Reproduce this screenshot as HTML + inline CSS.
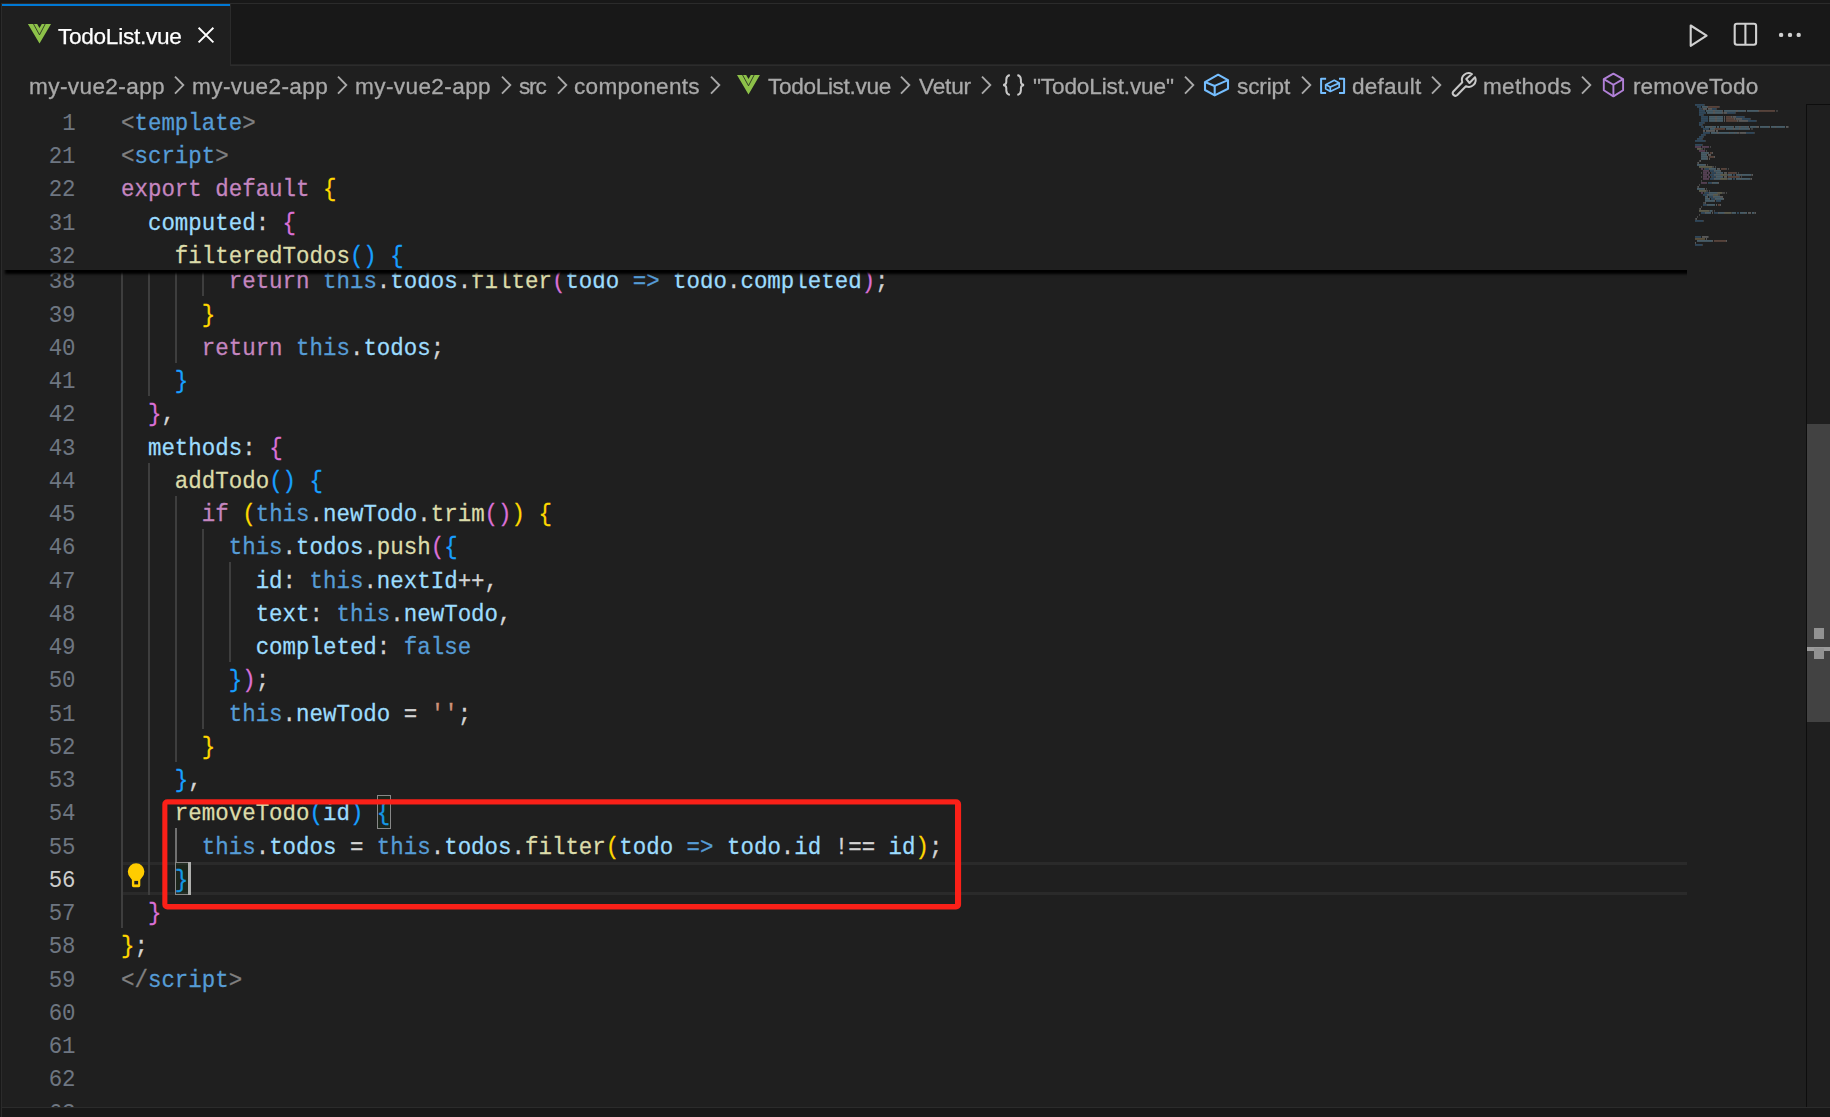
<!DOCTYPE html>
<html lang="en">
<head>
<meta charset="utf-8">
<title>TodoList.vue</title>
<style>
*{box-sizing:border-box;margin:0;padding:0}
html,body{width:1830px;height:1117px;overflow:hidden;background:#1f1f1f}
body{position:relative;font-family:"Liberation Sans",sans-serif;color:#cccccc}
.abs{position:absolute}
/* chrome */
#topstrip{left:0;top:0;width:1830px;height:3px;background:#181818}
#topline{left:0;top:3px;width:1830px;height:1px;background:#2b2b2b}
#tabbar{left:0;top:4px;width:1830px;height:60px;background:#181818}
#tabline1{left:0;top:64px;width:1830px;height:1px;background:#252525}
#tabline2{left:0;top:65px;width:1830px;height:1px;background:#2c2c2c}
#leftedge{left:0;top:0;width:1px;height:1117px;background:#181818}
#leftline{left:1px;top:3px;width:1px;height:1114px;background:#2b2b2b}
#tab{left:2px;top:4px;width:229px;height:62px;background:#1f1f1f;border-right:1px solid #2b2b2b}
#tabtop{left:2px;top:4px;width:228px;height:2px;background:#0078d4}
#tablabel{-webkit-text-stroke:0.25px;will-change:transform;left:58.2px;top:24px;font-size:22.6px;line-height:normal;color:#ffffff;white-space:nowrap;letter-spacing:-0.28px}
.bc{-webkit-text-stroke:0.3px;will-change:transform;position:absolute;top:74px;font-size:22.6px;line-height:normal;color:#a9a9a9;white-space:nowrap}
.ic{position:absolute;overflow:visible}
/* editor */
.cl,.ln{position:absolute;font-family:"Liberation Mono",monospace;font-size:22.45px;line-height:33.25px;height:33.25px;white-space:pre;transform:scaleY(1.06);transform-origin:0 22.6px}
.cl{left:121.00px;color:#d4d4d4;-webkit-text-stroke:0.25px}
.ln{left:0;width:75.6px;text-align:right;color:#6e7681;transform:scaleY(1.09)}
.ln.act{color:#cccccc}
.g{color:#808080}.t{color:#569cd6}.k{color:#c586c0}.p{color:#9cdcfe}.f{color:#dcdcaa}.w{color:#d4d4d4}.s{color:#ce9178}
.b1{color:#ffd700}.b2{color:#da70d6}.b3{color:#179fff}
.gd{position:absolute;width:2px;height:33.25px;background:#3e3e3e}
.ga{background:#707070}
#sticky{left:2px;top:0;width:1700px;height:166.25px;background:#1f1f1f;box-shadow:0 7px 2.5px -3px #000000}
#stickywrap{left:0;top:103.75px;width:1687px;height:200px;overflow:hidden}
#curline{left:121px;top:862px;width:1566px;height:33px;border-top:3px solid #2a2a2a;border-bottom:3px solid #2a2a2a}
.bm{position:absolute;width:13.5px;height:33.25px;border:1px solid #888888;background:rgba(0,100,0,0.1)}
#cursor{left:188px;top:861.7px;width:3px;height:33.25px;background:#aeafad}
/* scrollbar */
#sbline{left:1806px;top:104px;width:1px;height:1003px;background:#0d0d0d}
#sbtop{left:1806px;top:104px;width:24px;height:1px;background:#0d0d0d}
#slider{left:1807px;top:424px;width:23px;height:298px;background:#424242}
.sq{position:absolute;left:1814px;width:10px;height:10.4px;background:#929292}
#curmark{left:1807px;top:647.4px;width:23px;height:3.4px;background:#9b9b9b}
#bottomline{left:0;top:1107px;width:1830px;height:1px;background:#2b2b2b}
#bottom{left:0;top:1108px;width:1830px;height:9px;background:#181818}
</style>
</head>
<body>
<!-- editor main lines -->
<div class="abs" id="curline"></div>
<div id="editor">
<div class="ln" style="top:266.00px">38</div>
<div class="cl" style="top:266.00px"><span class="w">        </span><span class="k">return </span><span class="t">this</span><span class="w">.</span><span class="p">todos</span><span class="w">.</span><span class="f">filter</span><span class="b2">(</span><span class="p">todo </span><span class="t">=&gt; </span><span class="p">todo</span><span class="w">.</span><span class="p">completed</span><span class="b2">)</span><span class="w">;</span></div>
<i class="gd" style="left:121.00px;top:263.20px"></i>
<i class="gd" style="left:148.00px;top:263.20px"></i>
<i class="gd" style="left:175.00px;top:263.20px"></i>
<i class="gd" style="left:202.00px;top:263.20px"></i>
<div class="ln" style="top:300.00px">39</div>
<div class="cl" style="top:300.00px"><span class="w">      </span><span class="b1">}</span></div>
<i class="gd" style="left:121.00px;top:296.45px"></i>
<i class="gd" style="left:148.00px;top:296.45px"></i>
<i class="gd" style="left:175.00px;top:296.45px"></i>
<div class="ln" style="top:333.00px">40</div>
<div class="cl" style="top:333.00px"><span class="w">      </span><span class="k">return </span><span class="t">this</span><span class="w">.</span><span class="p">todos</span><span class="w">;</span></div>
<i class="gd" style="left:121.00px;top:329.70px"></i>
<i class="gd" style="left:148.00px;top:329.70px"></i>
<i class="gd" style="left:175.00px;top:329.70px"></i>
<div class="ln" style="top:366.00px">41</div>
<div class="cl" style="top:366.00px"><span class="w">    </span><span class="b3">}</span></div>
<i class="gd" style="left:121.00px;top:362.95px"></i>
<i class="gd" style="left:148.00px;top:362.95px"></i>
<div class="ln" style="top:399.00px">42</div>
<div class="cl" style="top:399.00px"><span class="w">  </span><span class="b2">}</span><span class="w">,</span></div>
<i class="gd" style="left:121.00px;top:396.20px"></i>
<div class="ln" style="top:433.00px">43</div>
<div class="cl" style="top:433.00px"><span class="w">  </span><span class="p">methods</span><span class="w">: </span><span class="b2">{</span></div>
<i class="gd" style="left:121.00px;top:429.45px"></i>
<div class="ln" style="top:466.00px">44</div>
<div class="cl" style="top:466.00px"><span class="w">    </span><span class="f">addTodo</span><span class="b3">() {</span></div>
<i class="gd" style="left:121.00px;top:462.70px"></i>
<i class="gd" style="left:148.00px;top:462.70px"></i>
<div class="ln" style="top:499.00px">45</div>
<div class="cl" style="top:499.00px"><span class="w">      </span><span class="k">if </span><span class="b1">(</span><span class="t">this</span><span class="w">.</span><span class="p">newTodo</span><span class="w">.</span><span class="f">trim</span><span class="b2">()</span><span class="b1">) {</span></div>
<i class="gd" style="left:121.00px;top:495.95px"></i>
<i class="gd" style="left:148.00px;top:495.95px"></i>
<i class="gd" style="left:175.00px;top:495.95px"></i>
<div class="ln" style="top:532.00px">46</div>
<div class="cl" style="top:532.00px"><span class="w">        </span><span class="t">this</span><span class="w">.</span><span class="p">todos</span><span class="w">.</span><span class="f">push</span><span class="b2">(</span><span class="b3">{</span></div>
<i class="gd" style="left:121.00px;top:529.20px"></i>
<i class="gd" style="left:148.00px;top:529.20px"></i>
<i class="gd" style="left:175.00px;top:529.20px"></i>
<i class="gd" style="left:202.00px;top:529.20px"></i>
<div class="ln" style="top:566.00px">47</div>
<div class="cl" style="top:566.00px"><span class="w">          </span><span class="p">id</span><span class="w">: </span><span class="t">this</span><span class="w">.</span><span class="p">nextId</span><span class="w">++,</span></div>
<i class="gd" style="left:121.00px;top:562.45px"></i>
<i class="gd" style="left:148.00px;top:562.45px"></i>
<i class="gd" style="left:175.00px;top:562.45px"></i>
<i class="gd" style="left:202.00px;top:562.45px"></i>
<i class="gd" style="left:229.00px;top:562.45px"></i>
<div class="ln" style="top:599.00px">48</div>
<div class="cl" style="top:599.00px"><span class="w">          </span><span class="p">text</span><span class="w">: </span><span class="t">this</span><span class="w">.</span><span class="p">newTodo</span><span class="w">,</span></div>
<i class="gd" style="left:121.00px;top:595.70px"></i>
<i class="gd" style="left:148.00px;top:595.70px"></i>
<i class="gd" style="left:175.00px;top:595.70px"></i>
<i class="gd" style="left:202.00px;top:595.70px"></i>
<i class="gd" style="left:229.00px;top:595.70px"></i>
<div class="ln" style="top:632.00px">49</div>
<div class="cl" style="top:632.00px"><span class="w">          </span><span class="p">completed</span><span class="w">: </span><span class="t">false</span></div>
<i class="gd" style="left:121.00px;top:628.95px"></i>
<i class="gd" style="left:148.00px;top:628.95px"></i>
<i class="gd" style="left:175.00px;top:628.95px"></i>
<i class="gd" style="left:202.00px;top:628.95px"></i>
<i class="gd" style="left:229.00px;top:628.95px"></i>
<div class="ln" style="top:665.00px">50</div>
<div class="cl" style="top:665.00px"><span class="w">        </span><span class="b3">}</span><span class="b2">)</span><span class="w">;</span></div>
<i class="gd" style="left:121.00px;top:662.20px"></i>
<i class="gd" style="left:148.00px;top:662.20px"></i>
<i class="gd" style="left:175.00px;top:662.20px"></i>
<i class="gd" style="left:202.00px;top:662.20px"></i>
<div class="ln" style="top:699.00px">51</div>
<div class="cl" style="top:699.00px"><span class="w">        </span><span class="t">this</span><span class="w">.</span><span class="p">newTodo</span><span class="w"> = </span><span class="s">''</span><span class="w">;</span></div>
<i class="gd" style="left:121.00px;top:695.45px"></i>
<i class="gd" style="left:148.00px;top:695.45px"></i>
<i class="gd" style="left:175.00px;top:695.45px"></i>
<i class="gd" style="left:202.00px;top:695.45px"></i>
<div class="ln" style="top:732.00px">52</div>
<div class="cl" style="top:732.00px"><span class="w">      </span><span class="b1">}</span></div>
<i class="gd" style="left:121.00px;top:728.70px"></i>
<i class="gd" style="left:148.00px;top:728.70px"></i>
<i class="gd" style="left:175.00px;top:728.70px"></i>
<div class="ln" style="top:765.00px">53</div>
<div class="cl" style="top:765.00px"><span class="w">    </span><span class="b3">}</span><span class="w">,</span></div>
<i class="gd" style="left:121.00px;top:761.95px"></i>
<i class="gd" style="left:148.00px;top:761.95px"></i>
<div class="ln" style="top:798.00px">54</div>
<div class="cl" style="top:798.00px"><span class="w">    </span><span class="f">removeTodo</span><span class="b3">(</span><span class="p">id</span><span class="b3">) {</span></div>
<i class="gd" style="left:121.00px;top:795.20px"></i>
<i class="gd" style="left:148.00px;top:795.20px"></i>
<div class="ln" style="top:832.00px">55</div>
<div class="cl" style="top:832.00px"><span class="w">      </span><span class="t">this</span><span class="w">.</span><span class="p">todos</span><span class="w"> = </span><span class="t">this</span><span class="w">.</span><span class="p">todos</span><span class="w">.</span><span class="f">filter</span><span class="b1">(</span><span class="p">todo </span><span class="t">=&gt; </span><span class="p">todo</span><span class="w">.</span><span class="p">id</span><span class="w"> !== </span><span class="p">id</span><span class="b1">)</span><span class="w">;</span></div>
<i class="gd" style="left:121.00px;top:828.45px"></i>
<i class="gd" style="left:148.00px;top:828.45px"></i>
<i class="gd ga" style="left:175.00px;top:828.45px"></i>
<div class="ln act" style="top:865.00px">56</div>
<div class="cl" style="top:865.00px"><span class="w">    </span><span class="b3">}</span></div>
<i class="gd" style="left:121.00px;top:861.70px"></i>
<i class="gd" style="left:148.00px;top:861.70px"></i>
<div class="ln" style="top:898.00px">57</div>
<div class="cl" style="top:898.00px"><span class="w">  </span><span class="b2">}</span></div>
<i class="gd" style="left:121.00px;top:894.95px"></i>
<div class="ln" style="top:931.00px">58</div>
<div class="cl" style="top:931.00px"><span class="b1">}</span><span class="w">;</span></div>
<div class="ln" style="top:965.00px">59</div>
<div class="cl" style="top:965.00px"><span class="g">&lt;/</span><span class="t">script</span><span class="g">&gt;</span></div>
<div class="ln" style="top:998.00px">60</div>
<div class="ln" style="top:1031.00px">61</div>
<div class="ln" style="top:1064.00px">62</div>
<div class="ln" style="top:1098.00px">63</div>
</div>
<i class="bm" style="left:377px;top:795px;width:14px;height:34px"></i>
<i class="bm" style="left:175px;top:862px;width:14px;height:33px"></i>
<div class="abs" id="cursor"></div>
<svg class="abs" id="bulb" style="left:126px;top:861px" width="21" height="29" viewBox="0 0 21 29"><path d="M4.23 16.47 L5.9 18.8 V24.6 Q5.9 26.2 7.5 26.2 H12.7 Q14.3 26.2 14.3 24.6 V18.8 L15.97 16.47 A8.3 8.3 0 1 0 4.23 16.47 Z" fill="#ffcc00"/><rect x="8.3" y="19.9" width="3.8" height="3.5" fill="#1f1f1f"/></svg>
<svg class="abs" id="redbox" style="left:0;top:0" width="1000" height="920" viewBox="0 0 1000 920"><path d="M167.3 799.3 H956.1 A5 5 0 0 1 961.1 804.3 V904.5 A5 5 0 0 1 956.1 909.5 H167.3 A5 5 0 0 1 162.3 904.5 V804.3 A5 5 0 0 1 167.3 799.3 Z M167.4 804.6 V903.9 H955.0 V804.6 Z" fill="#fa2018" fill-rule="evenodd"/></svg>
<!-- sticky scroll -->
<div class="abs" id="stickywrap"><div class="abs" id="sticky"></div></div>
<div class="ln st" style="top:108.00px">1</div>
<div class="cl st" style="top:108.00px"><span class="g">&lt;</span><span class="t">template</span><span class="g">&gt;</span></div>
<div class="ln st" style="top:141.00px">21</div>
<div class="cl st" style="top:141.00px"><span class="g">&lt;</span><span class="t">script</span><span class="g">&gt;</span></div>
<div class="ln st" style="top:174.00px">22</div>
<div class="cl st" style="top:174.00px"><span class="k">export default </span><span class="b1">{</span></div>
<div class="ln st" style="top:208.00px">31</div>
<div class="cl st" style="top:208.00px"><span class="w">  </span><span class="p">computed</span><span class="w">: </span><span class="b2">{</span></div>
<div class="ln st" style="top:241.00px">32</div>
<div class="cl st" style="top:241.00px"><span class="w">    </span><span class="f">filteredTodos</span><span class="b3">() {</span></div>
<!-- minimap -->
<svg class="abs" id="minimap" style="left:1695.2px;top:104.0px" width="100" height="146" viewBox="0 0 100 146" opacity="0.4"><rect x="0.0" y="0.2" width="9.0" height="1.5" fill="#569cd6"/><rect x="9.0" y="0.2" width="1.0" height="1.5" fill="#808080"/><rect x="2.0" y="2.2" width="4.0" height="1.5" fill="#569cd6"/><rect x="7.0" y="2.2" width="5.0" height="1.5" fill="#9cdcfe"/><rect x="12.0" y="2.2" width="1.0" height="1.5" fill="#d4d4d4"/><rect x="13.0" y="2.2" width="11.0" height="1.5" fill="#ce9178"/><rect x="24.0" y="2.2" width="1.0" height="1.5" fill="#808080"/><rect x="4.0" y="4.2" width="3.0" height="1.5" fill="#569cd6"/><rect x="7.0" y="4.2" width="1.0" height="1.5" fill="#808080"/><rect x="8.0" y="4.2" width="4.0" height="1.5" fill="#d4d4d4"/><rect x="13.0" y="4.2" width="4.0" height="1.5" fill="#d4d4d4"/><rect x="17.0" y="4.2" width="4.0" height="1.5" fill="#569cd6"/><rect x="21.0" y="4.2" width="1.0" height="1.5" fill="#808080"/><rect x="4.0" y="6.2" width="6.0" height="1.5" fill="#569cd6"/><rect x="11.0" y="6.2" width="7.0" height="1.5" fill="#9cdcfe"/><rect x="18.0" y="6.2" width="2.0" height="1.5" fill="#d4d4d4"/><rect x="20.0" y="6.2" width="7.0" height="1.5" fill="#9cdcfe"/><rect x="27.0" y="6.2" width="1.0" height="1.5" fill="#d4d4d4"/><rect x="29.0" y="6.2" width="12.0" height="1.5" fill="#9cdcfe"/><rect x="41.0" y="6.2" width="2.0" height="1.5" fill="#d4d4d4"/><rect x="43.0" y="6.2" width="7.0" height="1.5" fill="#9cdcfe"/><rect x="50.0" y="6.2" width="1.0" height="1.5" fill="#d4d4d4"/><rect x="52.0" y="6.2" width="11.0" height="1.5" fill="#9cdcfe"/><rect x="63.0" y="6.2" width="1.0" height="1.5" fill="#d4d4d4"/><rect x="64.0" y="6.2" width="16.0" height="1.5" fill="#ce9178"/><rect x="81.0" y="6.2" width="2.0" height="1.5" fill="#808080"/><rect x="4.0" y="8.2" width="7.0" height="1.5" fill="#569cd6"/><rect x="12.0" y="8.2" width="6.0" height="1.5" fill="#9cdcfe"/><rect x="18.0" y="8.2" width="2.0" height="1.5" fill="#d4d4d4"/><rect x="20.0" y="8.2" width="7.0" height="1.5" fill="#9cdcfe"/><rect x="27.0" y="8.2" width="1.0" height="1.5" fill="#d4d4d4"/><rect x="28.0" y="8.2" width="1.0" height="1.5" fill="#808080"/><rect x="29.0" y="8.2" width="3.0" height="1.5" fill="#d4d4d4"/><rect x="32.0" y="8.2" width="8.0" height="1.5" fill="#569cd6"/><rect x="40.0" y="8.2" width="1.0" height="1.5" fill="#808080"/><rect x="4.0" y="10.2" width="4.0" height="1.5" fill="#569cd6"/><rect x="8.0" y="10.2" width="1.0" height="1.5" fill="#808080"/><rect x="6.0" y="12.2" width="7.0" height="1.5" fill="#569cd6"/><rect x="14.0" y="12.2" width="6.0" height="1.5" fill="#9cdcfe"/><rect x="20.0" y="12.2" width="2.0" height="1.5" fill="#d4d4d4"/><rect x="22.0" y="12.2" width="6.0" height="1.5" fill="#9cdcfe"/><rect x="29.0" y="12.2" width="1.0" height="1.5" fill="#d4d4d4"/><rect x="31.0" y="12.2" width="5.0" height="1.5" fill="#ce9178"/><rect x="36.0" y="12.2" width="1.0" height="1.5" fill="#d4d4d4"/><rect x="37.0" y="12.2" width="1.0" height="1.5" fill="#808080"/><rect x="38.0" y="12.2" width="3.0" height="1.5" fill="#d4d4d4"/><rect x="41.0" y="12.2" width="8.0" height="1.5" fill="#569cd6"/><rect x="49.0" y="12.2" width="1.0" height="1.5" fill="#808080"/><rect x="6.0" y="14.2" width="7.0" height="1.5" fill="#569cd6"/><rect x="14.0" y="14.2" width="6.0" height="1.5" fill="#9cdcfe"/><rect x="20.0" y="14.2" width="2.0" height="1.5" fill="#d4d4d4"/><rect x="22.0" y="14.2" width="6.0" height="1.5" fill="#9cdcfe"/><rect x="29.0" y="14.2" width="1.0" height="1.5" fill="#d4d4d4"/><rect x="31.0" y="14.2" width="8.0" height="1.5" fill="#ce9178"/><rect x="39.0" y="14.2" width="1.0" height="1.5" fill="#d4d4d4"/><rect x="40.0" y="14.2" width="1.0" height="1.5" fill="#808080"/><rect x="41.0" y="14.2" width="6.0" height="1.5" fill="#d4d4d4"/><rect x="47.0" y="14.2" width="8.0" height="1.5" fill="#569cd6"/><rect x="55.0" y="14.2" width="1.0" height="1.5" fill="#808080"/><rect x="6.0" y="16.2" width="7.0" height="1.5" fill="#569cd6"/><rect x="14.0" y="16.2" width="6.0" height="1.5" fill="#9cdcfe"/><rect x="20.0" y="16.2" width="2.0" height="1.5" fill="#d4d4d4"/><rect x="22.0" y="16.2" width="6.0" height="1.5" fill="#9cdcfe"/><rect x="29.0" y="16.2" width="1.0" height="1.5" fill="#d4d4d4"/><rect x="31.0" y="16.2" width="11.0" height="1.5" fill="#ce9178"/><rect x="42.0" y="16.2" width="1.0" height="1.5" fill="#d4d4d4"/><rect x="43.0" y="16.2" width="1.0" height="1.5" fill="#808080"/><rect x="44.0" y="16.2" width="9.0" height="1.5" fill="#d4d4d4"/><rect x="53.0" y="16.2" width="8.0" height="1.5" fill="#569cd6"/><rect x="61.0" y="16.2" width="1.0" height="1.5" fill="#808080"/><rect x="4.0" y="18.2" width="5.0" height="1.5" fill="#569cd6"/><rect x="9.0" y="18.2" width="1.0" height="1.5" fill="#808080"/><rect x="4.0" y="20.2" width="3.0" height="1.5" fill="#569cd6"/><rect x="7.0" y="20.2" width="1.0" height="1.5" fill="#808080"/><rect x="6.0" y="22.2" width="3.0" height="1.5" fill="#569cd6"/><rect x="10.0" y="22.2" width="5.0" height="1.5" fill="#9cdcfe"/><rect x="15.0" y="22.2" width="2.0" height="1.5" fill="#d4d4d4"/><rect x="17.0" y="22.2" width="4.0" height="1.5" fill="#9cdcfe"/><rect x="22.0" y="22.2" width="2.0" height="1.5" fill="#9cdcfe"/><rect x="25.0" y="22.2" width="13.0" height="1.5" fill="#9cdcfe"/><rect x="38.0" y="22.2" width="1.0" height="1.5" fill="#d4d4d4"/><rect x="40.0" y="22.2" width="4.0" height="1.5" fill="#9cdcfe"/><rect x="44.0" y="22.2" width="2.0" height="1.5" fill="#d4d4d4"/><rect x="46.0" y="22.2" width="4.0" height="1.5" fill="#9cdcfe"/><rect x="50.0" y="22.2" width="1.0" height="1.5" fill="#d4d4d4"/><rect x="51.0" y="22.2" width="2.0" height="1.5" fill="#9cdcfe"/><rect x="53.0" y="22.2" width="1.0" height="1.5" fill="#d4d4d4"/><rect x="55.0" y="22.2" width="6.0" height="1.5" fill="#9cdcfe"/><rect x="61.0" y="22.2" width="3.0" height="1.5" fill="#d4d4d4"/><rect x="65.0" y="22.2" width="9.0" height="1.5" fill="#9cdcfe"/><rect x="74.0" y="22.2" width="1.0" height="1.5" fill="#d4d4d4"/><rect x="76.0" y="22.2" width="4.0" height="1.5" fill="#9cdcfe"/><rect x="80.0" y="22.2" width="1.0" height="1.5" fill="#d4d4d4"/><rect x="81.0" y="22.2" width="9.0" height="1.5" fill="#9cdcfe"/><rect x="91.0" y="22.2" width="2.0" height="1.5" fill="#d4d4d4"/><rect x="93.0" y="22.2" width="1.0" height="1.5" fill="#808080"/><rect x="8.0" y="24.2" width="6.0" height="1.5" fill="#569cd6"/><rect x="15.0" y="24.2" width="4.0" height="1.5" fill="#9cdcfe"/><rect x="19.0" y="24.2" width="1.0" height="1.5" fill="#d4d4d4"/><rect x="20.0" y="24.2" width="10.0" height="1.5" fill="#ce9178"/><rect x="31.0" y="24.2" width="7.0" height="1.5" fill="#9cdcfe"/><rect x="38.0" y="24.2" width="2.0" height="1.5" fill="#d4d4d4"/><rect x="40.0" y="24.2" width="4.0" height="1.5" fill="#9cdcfe"/><rect x="44.0" y="24.2" width="1.0" height="1.5" fill="#d4d4d4"/><rect x="45.0" y="24.2" width="9.0" height="1.5" fill="#9cdcfe"/><rect x="54.0" y="24.2" width="1.0" height="1.5" fill="#d4d4d4"/><rect x="56.0" y="24.2" width="2.0" height="1.5" fill="#808080"/><rect x="8.0" y="26.2" width="2.0" height="1.5" fill="#d4d4d4"/><rect x="11.0" y="26.2" width="9.0" height="1.5" fill="#d4d4d4"/><rect x="21.0" y="26.2" width="2.0" height="1.5" fill="#d4d4d4"/><rect x="8.0" y="28.2" width="7.0" height="1.5" fill="#569cd6"/><rect x="16.0" y="28.2" width="6.0" height="1.5" fill="#9cdcfe"/><rect x="22.0" y="28.2" width="2.0" height="1.5" fill="#d4d4d4"/><rect x="24.0" y="28.2" width="10.0" height="1.5" fill="#9cdcfe"/><rect x="34.0" y="28.2" width="1.0" height="1.5" fill="#d4d4d4"/><rect x="35.0" y="28.2" width="4.0" height="1.5" fill="#9cdcfe"/><rect x="39.0" y="28.2" width="1.0" height="1.5" fill="#d4d4d4"/><rect x="40.0" y="28.2" width="2.0" height="1.5" fill="#9cdcfe"/><rect x="42.0" y="28.2" width="2.0" height="1.5" fill="#d4d4d4"/><rect x="44.0" y="28.2" width="1.0" height="1.5" fill="#808080"/><rect x="45.0" y="28.2" width="6.0" height="1.5" fill="#d4d4d4"/><rect x="51.0" y="28.2" width="8.0" height="1.5" fill="#569cd6"/><rect x="59.0" y="28.2" width="1.0" height="1.5" fill="#808080"/><rect x="6.0" y="30.2" width="4.0" height="1.5" fill="#569cd6"/><rect x="10.0" y="30.2" width="1.0" height="1.5" fill="#808080"/><rect x="4.0" y="32.2" width="4.0" height="1.5" fill="#569cd6"/><rect x="8.0" y="32.2" width="1.0" height="1.5" fill="#808080"/><rect x="2.0" y="34.2" width="5.0" height="1.5" fill="#569cd6"/><rect x="7.0" y="34.2" width="1.0" height="1.5" fill="#808080"/><rect x="0.0" y="36.2" width="10.0" height="1.5" fill="#569cd6"/><rect x="10.0" y="36.2" width="1.0" height="1.5" fill="#808080"/><rect x="0.0" y="40.2" width="7.0" height="1.5" fill="#569cd6"/><rect x="7.0" y="40.2" width="1.0" height="1.5" fill="#808080"/><rect x="0.0" y="42.2" width="6.0" height="1.5" fill="#c586c0"/><rect x="7.0" y="42.2" width="7.0" height="1.5" fill="#c586c0"/><rect x="15.0" y="42.2" width="1.0" height="1.5" fill="#999999"/><rect x="2.0" y="44.2" width="4.0" height="1.5" fill="#dcdcaa"/><rect x="6.0" y="44.2" width="2.0" height="1.5" fill="#999999"/><rect x="9.0" y="44.2" width="1.0" height="1.5" fill="#999999"/><rect x="4.0" y="46.2" width="6.0" height="1.5" fill="#c586c0"/><rect x="11.0" y="46.2" width="1.0" height="1.5" fill="#999999"/><rect x="6.0" y="48.2" width="7.0" height="1.5" fill="#9cdcfe"/><rect x="13.0" y="48.2" width="1.0" height="1.5" fill="#d4d4d4"/><rect x="15.0" y="48.2" width="2.0" height="1.5" fill="#ce9178"/><rect x="17.0" y="48.2" width="1.0" height="1.5" fill="#d4d4d4"/><rect x="6.0" y="50.2" width="5.0" height="1.5" fill="#9cdcfe"/><rect x="11.0" y="50.2" width="1.0" height="1.5" fill="#d4d4d4"/><rect x="13.0" y="50.2" width="3.0" height="1.5" fill="#d4d4d4"/><rect x="6.0" y="52.2" width="6.0" height="1.5" fill="#9cdcfe"/><rect x="12.0" y="52.2" width="1.0" height="1.5" fill="#d4d4d4"/><rect x="14.0" y="52.2" width="5.0" height="1.5" fill="#ce9178"/><rect x="19.0" y="52.2" width="1.0" height="1.5" fill="#d4d4d4"/><rect x="6.0" y="54.2" width="6.0" height="1.5" fill="#9cdcfe"/><rect x="12.0" y="54.2" width="1.0" height="1.5" fill="#d4d4d4"/><rect x="14.0" y="54.2" width="1.0" height="1.5" fill="#d4d4d4"/><rect x="4.0" y="56.2" width="1.0" height="1.5" fill="#999999"/><rect x="5.0" y="56.2" width="1.0" height="1.5" fill="#d4d4d4"/><rect x="2.0" y="58.2" width="1.0" height="1.5" fill="#999999"/><rect x="3.0" y="58.2" width="1.0" height="1.5" fill="#d4d4d4"/><rect x="2.0" y="60.2" width="8.0" height="1.5" fill="#9cdcfe"/><rect x="10.0" y="60.2" width="1.0" height="1.5" fill="#d4d4d4"/><rect x="12.0" y="60.2" width="1.0" height="1.5" fill="#999999"/><rect x="4.0" y="62.2" width="13.0" height="1.5" fill="#dcdcaa"/><rect x="17.0" y="62.2" width="2.0" height="1.5" fill="#999999"/><rect x="20.0" y="62.2" width="1.0" height="1.5" fill="#999999"/><rect x="6.0" y="64.2" width="2.0" height="1.5" fill="#c586c0"/><rect x="9.0" y="64.2" width="1.0" height="1.5" fill="#999999"/><rect x="10.0" y="64.2" width="4.0" height="1.5" fill="#569cd6"/><rect x="14.0" y="64.2" width="1.0" height="1.5" fill="#d4d4d4"/><rect x="15.0" y="64.2" width="6.0" height="1.5" fill="#9cdcfe"/><rect x="22.0" y="64.2" width="3.0" height="1.5" fill="#d4d4d4"/><rect x="26.0" y="64.2" width="5.0" height="1.5" fill="#ce9178"/><rect x="31.0" y="64.2" width="1.0" height="1.5" fill="#999999"/><rect x="33.0" y="64.2" width="1.0" height="1.5" fill="#999999"/><rect x="8.0" y="66.2" width="6.0" height="1.5" fill="#c586c0"/><rect x="15.0" y="66.2" width="4.0" height="1.5" fill="#569cd6"/><rect x="19.0" y="66.2" width="1.0" height="1.5" fill="#d4d4d4"/><rect x="20.0" y="66.2" width="5.0" height="1.5" fill="#9cdcfe"/><rect x="25.0" y="66.2" width="1.0" height="1.5" fill="#d4d4d4"/><rect x="6.0" y="68.2" width="1.0" height="1.5" fill="#999999"/><rect x="8.0" y="68.2" width="4.0" height="1.5" fill="#c586c0"/><rect x="13.0" y="68.2" width="2.0" height="1.5" fill="#c586c0"/><rect x="16.0" y="68.2" width="1.0" height="1.5" fill="#999999"/><rect x="17.0" y="68.2" width="4.0" height="1.5" fill="#569cd6"/><rect x="21.0" y="68.2" width="1.0" height="1.5" fill="#d4d4d4"/><rect x="22.0" y="68.2" width="6.0" height="1.5" fill="#9cdcfe"/><rect x="29.0" y="68.2" width="3.0" height="1.5" fill="#d4d4d4"/><rect x="33.0" y="68.2" width="8.0" height="1.5" fill="#ce9178"/><rect x="41.0" y="68.2" width="1.0" height="1.5" fill="#999999"/><rect x="43.0" y="68.2" width="1.0" height="1.5" fill="#999999"/><rect x="8.0" y="70.2" width="6.0" height="1.5" fill="#c586c0"/><rect x="15.0" y="70.2" width="4.0" height="1.5" fill="#569cd6"/><rect x="19.0" y="70.2" width="1.0" height="1.5" fill="#d4d4d4"/><rect x="20.0" y="70.2" width="5.0" height="1.5" fill="#9cdcfe"/><rect x="25.0" y="70.2" width="1.0" height="1.5" fill="#d4d4d4"/><rect x="26.0" y="70.2" width="6.0" height="1.5" fill="#dcdcaa"/><rect x="32.0" y="70.2" width="1.0" height="1.5" fill="#999999"/><rect x="33.0" y="70.2" width="4.0" height="1.5" fill="#9cdcfe"/><rect x="38.0" y="70.2" width="2.0" height="1.5" fill="#569cd6"/><rect x="41.0" y="70.2" width="1.0" height="1.5" fill="#d4d4d4"/><rect x="42.0" y="70.2" width="4.0" height="1.5" fill="#9cdcfe"/><rect x="46.0" y="70.2" width="1.0" height="1.5" fill="#d4d4d4"/><rect x="47.0" y="70.2" width="9.0" height="1.5" fill="#9cdcfe"/><rect x="56.0" y="70.2" width="1.0" height="1.5" fill="#999999"/><rect x="57.0" y="70.2" width="1.0" height="1.5" fill="#d4d4d4"/><rect x="6.0" y="72.2" width="1.0" height="1.5" fill="#999999"/><rect x="8.0" y="72.2" width="4.0" height="1.5" fill="#c586c0"/><rect x="13.0" y="72.2" width="2.0" height="1.5" fill="#c586c0"/><rect x="16.0" y="72.2" width="1.0" height="1.5" fill="#999999"/><rect x="17.0" y="72.2" width="4.0" height="1.5" fill="#569cd6"/><rect x="21.0" y="72.2" width="1.0" height="1.5" fill="#d4d4d4"/><rect x="22.0" y="72.2" width="6.0" height="1.5" fill="#9cdcfe"/><rect x="29.0" y="72.2" width="3.0" height="1.5" fill="#d4d4d4"/><rect x="33.0" y="72.2" width="11.0" height="1.5" fill="#ce9178"/><rect x="44.0" y="72.2" width="1.0" height="1.5" fill="#999999"/><rect x="46.0" y="72.2" width="1.0" height="1.5" fill="#999999"/><rect x="8.0" y="74.2" width="6.0" height="1.5" fill="#c586c0"/><rect x="15.0" y="74.2" width="4.0" height="1.5" fill="#569cd6"/><rect x="19.0" y="74.2" width="1.0" height="1.5" fill="#d4d4d4"/><rect x="20.0" y="74.2" width="5.0" height="1.5" fill="#9cdcfe"/><rect x="25.0" y="74.2" width="1.0" height="1.5" fill="#d4d4d4"/><rect x="26.0" y="74.2" width="6.0" height="1.5" fill="#dcdcaa"/><rect x="32.0" y="74.2" width="1.0" height="1.5" fill="#999999"/><rect x="33.0" y="74.2" width="4.0" height="1.5" fill="#9cdcfe"/><rect x="38.0" y="74.2" width="2.0" height="1.5" fill="#569cd6"/><rect x="41.0" y="74.2" width="4.0" height="1.5" fill="#9cdcfe"/><rect x="45.0" y="74.2" width="1.0" height="1.5" fill="#d4d4d4"/><rect x="46.0" y="74.2" width="9.0" height="1.5" fill="#9cdcfe"/><rect x="55.0" y="74.2" width="1.0" height="1.5" fill="#999999"/><rect x="56.0" y="74.2" width="1.0" height="1.5" fill="#d4d4d4"/><rect x="6.0" y="76.2" width="1.0" height="1.5" fill="#999999"/><rect x="6.0" y="78.2" width="6.0" height="1.5" fill="#c586c0"/><rect x="13.0" y="78.2" width="4.0" height="1.5" fill="#569cd6"/><rect x="17.0" y="78.2" width="1.0" height="1.5" fill="#d4d4d4"/><rect x="18.0" y="78.2" width="5.0" height="1.5" fill="#9cdcfe"/><rect x="23.0" y="78.2" width="1.0" height="1.5" fill="#d4d4d4"/><rect x="4.0" y="80.2" width="1.0" height="1.5" fill="#999999"/><rect x="2.0" y="82.2" width="1.0" height="1.5" fill="#999999"/><rect x="3.0" y="82.2" width="1.0" height="1.5" fill="#d4d4d4"/><rect x="2.0" y="84.2" width="7.0" height="1.5" fill="#9cdcfe"/><rect x="9.0" y="84.2" width="1.0" height="1.5" fill="#d4d4d4"/><rect x="11.0" y="84.2" width="1.0" height="1.5" fill="#999999"/><rect x="4.0" y="86.2" width="7.0" height="1.5" fill="#dcdcaa"/><rect x="11.0" y="86.2" width="2.0" height="1.5" fill="#999999"/><rect x="14.0" y="86.2" width="1.0" height="1.5" fill="#999999"/><rect x="6.0" y="88.2" width="2.0" height="1.5" fill="#c586c0"/><rect x="9.0" y="88.2" width="1.0" height="1.5" fill="#999999"/><rect x="10.0" y="88.2" width="4.0" height="1.5" fill="#569cd6"/><rect x="14.0" y="88.2" width="1.0" height="1.5" fill="#d4d4d4"/><rect x="15.0" y="88.2" width="7.0" height="1.5" fill="#9cdcfe"/><rect x="22.0" y="88.2" width="1.0" height="1.5" fill="#d4d4d4"/><rect x="23.0" y="88.2" width="4.0" height="1.5" fill="#dcdcaa"/><rect x="27.0" y="88.2" width="3.0" height="1.5" fill="#999999"/><rect x="31.0" y="88.2" width="1.0" height="1.5" fill="#999999"/><rect x="8.0" y="90.2" width="4.0" height="1.5" fill="#569cd6"/><rect x="12.0" y="90.2" width="1.0" height="1.5" fill="#d4d4d4"/><rect x="13.0" y="90.2" width="5.0" height="1.5" fill="#9cdcfe"/><rect x="18.0" y="90.2" width="1.0" height="1.5" fill="#d4d4d4"/><rect x="19.0" y="90.2" width="4.0" height="1.5" fill="#dcdcaa"/><rect x="23.0" y="90.2" width="2.0" height="1.5" fill="#999999"/><rect x="10.0" y="92.2" width="2.0" height="1.5" fill="#9cdcfe"/><rect x="12.0" y="92.2" width="1.0" height="1.5" fill="#d4d4d4"/><rect x="14.0" y="92.2" width="4.0" height="1.5" fill="#569cd6"/><rect x="18.0" y="92.2" width="1.0" height="1.5" fill="#d4d4d4"/><rect x="19.0" y="92.2" width="6.0" height="1.5" fill="#9cdcfe"/><rect x="25.0" y="92.2" width="3.0" height="1.5" fill="#d4d4d4"/><rect x="10.0" y="94.2" width="4.0" height="1.5" fill="#9cdcfe"/><rect x="14.0" y="94.2" width="1.0" height="1.5" fill="#d4d4d4"/><rect x="16.0" y="94.2" width="4.0" height="1.5" fill="#569cd6"/><rect x="20.0" y="94.2" width="1.0" height="1.5" fill="#d4d4d4"/><rect x="21.0" y="94.2" width="7.0" height="1.5" fill="#9cdcfe"/><rect x="28.0" y="94.2" width="1.0" height="1.5" fill="#d4d4d4"/><rect x="10.0" y="96.2" width="9.0" height="1.5" fill="#9cdcfe"/><rect x="19.0" y="96.2" width="1.0" height="1.5" fill="#d4d4d4"/><rect x="21.0" y="96.2" width="5.0" height="1.5" fill="#569cd6"/><rect x="8.0" y="98.2" width="2.0" height="1.5" fill="#999999"/><rect x="10.0" y="98.2" width="1.0" height="1.5" fill="#d4d4d4"/><rect x="8.0" y="100.2" width="4.0" height="1.5" fill="#569cd6"/><rect x="12.0" y="100.2" width="1.0" height="1.5" fill="#d4d4d4"/><rect x="13.0" y="100.2" width="7.0" height="1.5" fill="#9cdcfe"/><rect x="21.0" y="100.2" width="1.0" height="1.5" fill="#d4d4d4"/><rect x="23.0" y="100.2" width="2.0" height="1.5" fill="#ce9178"/><rect x="25.0" y="100.2" width="1.0" height="1.5" fill="#d4d4d4"/><rect x="6.0" y="102.2" width="1.0" height="1.5" fill="#999999"/><rect x="4.0" y="104.2" width="1.0" height="1.5" fill="#999999"/><rect x="5.0" y="104.2" width="1.0" height="1.5" fill="#d4d4d4"/><rect x="4.0" y="106.2" width="10.0" height="1.5" fill="#dcdcaa"/><rect x="14.0" y="106.2" width="1.0" height="1.5" fill="#999999"/><rect x="15.0" y="106.2" width="2.0" height="1.5" fill="#9cdcfe"/><rect x="17.0" y="106.2" width="1.0" height="1.5" fill="#999999"/><rect x="19.0" y="106.2" width="1.0" height="1.5" fill="#999999"/><rect x="6.0" y="108.2" width="4.0" height="1.5" fill="#569cd6"/><rect x="10.0" y="108.2" width="1.0" height="1.5" fill="#d4d4d4"/><rect x="11.0" y="108.2" width="5.0" height="1.5" fill="#9cdcfe"/><rect x="17.0" y="108.2" width="1.0" height="1.5" fill="#d4d4d4"/><rect x="19.0" y="108.2" width="4.0" height="1.5" fill="#569cd6"/><rect x="23.0" y="108.2" width="1.0" height="1.5" fill="#d4d4d4"/><rect x="24.0" y="108.2" width="5.0" height="1.5" fill="#9cdcfe"/><rect x="29.0" y="108.2" width="1.0" height="1.5" fill="#d4d4d4"/><rect x="30.0" y="108.2" width="6.0" height="1.5" fill="#dcdcaa"/><rect x="36.0" y="108.2" width="1.0" height="1.5" fill="#999999"/><rect x="37.0" y="108.2" width="4.0" height="1.5" fill="#9cdcfe"/><rect x="42.0" y="108.2" width="2.0" height="1.5" fill="#569cd6"/><rect x="45.0" y="108.2" width="4.0" height="1.5" fill="#9cdcfe"/><rect x="49.0" y="108.2" width="1.0" height="1.5" fill="#d4d4d4"/><rect x="50.0" y="108.2" width="2.0" height="1.5" fill="#9cdcfe"/><rect x="53.0" y="108.2" width="3.0" height="1.5" fill="#d4d4d4"/><rect x="57.0" y="108.2" width="2.0" height="1.5" fill="#9cdcfe"/><rect x="59.0" y="108.2" width="1.0" height="1.5" fill="#999999"/><rect x="60.0" y="108.2" width="1.0" height="1.5" fill="#d4d4d4"/><rect x="4.0" y="110.2" width="1.0" height="1.5" fill="#999999"/><rect x="2.0" y="112.2" width="1.0" height="1.5" fill="#999999"/><rect x="0.0" y="114.2" width="1.0" height="1.5" fill="#999999"/><rect x="1.0" y="114.2" width="1.0" height="1.5" fill="#d4d4d4"/><rect x="0.0" y="116.2" width="8.0" height="1.5" fill="#569cd6"/><rect x="8.0" y="116.2" width="1.0" height="1.5" fill="#808080"/><rect x="0.0" y="132.2" width="6.0" height="1.5" fill="#569cd6"/><rect x="7.0" y="132.2" width="6.0" height="1.5" fill="#d4d4d4"/><rect x="13.0" y="132.2" width="1.0" height="1.5" fill="#808080"/><rect x="0.0" y="134.2" width="10.0" height="1.5" fill="#d7ba7d"/><rect x="11.0" y="134.2" width="1.0" height="1.5" fill="#d4d4d4"/><rect x="2.0" y="136.2" width="15.0" height="1.5" fill="#9cdcfe"/><rect x="17.0" y="136.2" width="1.0" height="1.5" fill="#d4d4d4"/><rect x="19.0" y="136.2" width="12.0" height="1.5" fill="#ce9178"/><rect x="31.0" y="136.2" width="1.0" height="1.5" fill="#d4d4d4"/><rect x="0.0" y="138.2" width="1.0" height="1.5" fill="#d4d4d4"/><rect x="0.0" y="140.2" width="7.0" height="1.5" fill="#569cd6"/><rect x="7.0" y="140.2" width="1.0" height="1.5" fill="#808080"/></svg>
<!-- scrollbar -->
<div class="abs" id="sbline"></div>
<div class="abs" id="sbtop"></div>
<div class="abs" id="slider"></div>
<i class="sq" style="top:628.4px"></i>
<div class="abs" id="curmark"></div>
<i class="sq" style="top:648.4px"></i>
<!-- chrome -->
<div class="abs" id="topstrip"></div>
<div class="abs" id="tabbar"></div>
<div class="abs" id="tabline1"></div>
<div class="abs" id="tabline2"></div>
<div class="abs" id="topline"></div>
<div class="abs" id="tab"></div>
<div class="abs" id="tabtop"></div>
<div class="abs" id="tablabel">TodoList.vue</div>
<div class="abs" id="bottomline"></div>
<div class="abs" id="bottom"></div>
<div class="abs" id="leftedge"></div>
<div class="abs" id="leftline"></div>
<!-- breadcrumbs -->
<span class="bc" style="left:29.2px;letter-spacing:0.38px">my-vue2-app</span>
<span class="bc" style="left:192.0px;letter-spacing:0.40px">my-vue2-app</span>
<span class="bc" style="left:355.3px;letter-spacing:0.38px">my-vue2-app</span>
<span class="bc" style="left:519.0px;letter-spacing:-1.20px">src</span>
<span class="bc" style="left:574.0px;letter-spacing:0.28px">components</span>
<span class="bc" style="left:767.7px;letter-spacing:-0.33px">TodoList.vue</span>
<span class="bc" style="left:918.5px;letter-spacing:-0.18px">Vetur</span>
<span class="bc" style="left:1032.6px;letter-spacing:-0.15px">&quot;TodoList.vue&quot;</span>
<span class="bc" style="left:1236.6px;letter-spacing:-0.14px">script</span>
<span class="bc" style="left:1352.0px;letter-spacing:0.22px">default</span>
<span class="bc" style="left:1483.2px;letter-spacing:0.28px">methods</span>
<span class="bc" style="left:1632.8px;letter-spacing:0.10px">removeTodo</span>
<svg class="ic" style="left:174.0px;top:75px" width="12" height="21" viewBox="0 0 12 21"><path d="M1 1.6 L9.3 10.1 L1 18.6" fill="none" stroke="#a9a9a9" stroke-width="1.9"/></svg>
<svg class="ic" style="left:337.0px;top:75px" width="12" height="21" viewBox="0 0 12 21"><path d="M1 1.6 L9.3 10.1 L1 18.6" fill="none" stroke="#a9a9a9" stroke-width="1.9"/></svg>
<svg class="ic" style="left:500.9px;top:75px" width="12" height="21" viewBox="0 0 12 21"><path d="M1 1.6 L9.3 10.1 L1 18.6" fill="none" stroke="#a9a9a9" stroke-width="1.9"/></svg>
<svg class="ic" style="left:556.7px;top:75px" width="12" height="21" viewBox="0 0 12 21"><path d="M1 1.6 L9.3 10.1 L1 18.6" fill="none" stroke="#a9a9a9" stroke-width="1.9"/></svg>
<svg class="ic" style="left:709.5px;top:75px" width="12" height="21" viewBox="0 0 12 21"><path d="M1 1.6 L9.3 10.1 L1 18.6" fill="none" stroke="#a9a9a9" stroke-width="1.9"/></svg>
<svg class="ic" style="left:900.1px;top:75px" width="12" height="21" viewBox="0 0 12 21"><path d="M1 1.6 L9.3 10.1 L1 18.6" fill="none" stroke="#a9a9a9" stroke-width="1.9"/></svg>
<svg class="ic" style="left:980.8px;top:75px" width="12" height="21" viewBox="0 0 12 21"><path d="M1 1.6 L9.3 10.1 L1 18.6" fill="none" stroke="#a9a9a9" stroke-width="1.9"/></svg>
<svg class="ic" style="left:1183.8px;top:75px" width="12" height="21" viewBox="0 0 12 21"><path d="M1 1.6 L9.3 10.1 L1 18.6" fill="none" stroke="#a9a9a9" stroke-width="1.9"/></svg>
<svg class="ic" style="left:1300.7px;top:75px" width="12" height="21" viewBox="0 0 12 21"><path d="M1 1.6 L9.3 10.1 L1 18.6" fill="none" stroke="#a9a9a9" stroke-width="1.9"/></svg>
<svg class="ic" style="left:1431.4px;top:75px" width="12" height="21" viewBox="0 0 12 21"><path d="M1 1.6 L9.3 10.1 L1 18.6" fill="none" stroke="#a9a9a9" stroke-width="1.9"/></svg>
<svg class="ic" style="left:1581.2px;top:75px" width="12" height="21" viewBox="0 0 12 21"><path d="M1 1.6 L9.3 10.1 L1 18.6" fill="none" stroke="#a9a9a9" stroke-width="1.9"/></svg>
<svg class="abs" id="icons" style="left:0;top:0" width="1830" height="110" viewBox="0 0 1830 110" fill="none">
<!-- vue icon (tab) -->
<path d="M27.9 24 H37.2 L39.5 28.1 L41.8 24 H51 L39.5 43.6 Z" fill="#8dc149"/>
<path d="M33.3 23.6 L39.5 34.9 L45.4 23.6" stroke="#1f1f1f" stroke-width="0.8"/>
<!-- tab close -->
<path d="M198.6 27.8 L213.4 42.4 M213.4 27.8 L198.6 42.4" stroke="#ffffff" stroke-width="1.9"/>
<!-- vue icon (breadcrumb) -->
<path d="M737 74.9 H746.2 L748.5 79 L750.8 74.9 H759.9 L748.5 94.5 Z" fill="#8dc149"/>
<path d="M742.3 74.5 L748.5 85.8 L754.4 74.5" stroke="#1f1f1f" stroke-width="0.8"/>
<!-- {} namespace icon -->
<path d="M1009.8 75 C1006.8 76 1006.3 77.6 1006.3 79.5 V82 C1006.3 83.8 1005.4 84.7 1003.2 85 C1005.4 85.3 1006.3 86.2 1006.3 88 V90.5 C1006.3 92.400000000000006 1006.8 94 1009.8 95" stroke="#c8c8c8" stroke-width="2"/>
<path d="M1017.4 75 C1020.4 76 1020.9 77.6 1020.9 79.5 V82 C1020.9 83.8 1021.8 84.7 1024 85 C1021.8 85.3 1020.9 86.2 1020.9 88 V90.5 C1020.9 92.400000000000006 1020.4 94 1017.4 95" stroke="#c8c8c8" stroke-width="2"/>
<!-- symbol-field (script) -->
<g stroke="#75beff" stroke-width="2.1" stroke-linejoin="round">
<path d="M1218.1 74.7 L1228 80.1 L1214.7 85.9 L1205 82.1 Z"/>
<path d="M1205 82.1 V90 L1214.7 95.4 L1228 88.7 V80.1"/>
<path d="M1214.7 85.9 V95.4"/>
</g>
<!-- symbol-variable (default) -->
<g stroke="#75beff" stroke-width="2" stroke-linejoin="round">
<path d="M1326.1 78.8 H1321.1 V93.1 H1326.1"/>
<path d="M1339 78.8 H1344.1 V93.1 H1339"/>
</g>
<g stroke="#75beff" stroke-width="1.7" stroke-linejoin="round">
<path d="M1334.3 80.3 L1339.2 83.1 L1330.3 87 L1325.7 84.7 Z"/>
<path d="M1325.7 84.7 V88.7 L1330.3 91.4 L1339.2 87.3 V83.1"/>
<path d="M1330.3 87 V91.4"/>
</g>
<!-- wrench (methods) -->
<g stroke="#c8c8c8" stroke-width="2" stroke-linejoin="round" stroke-linecap="round">
<path d="M1471.96 74.05 A6.8 6.8 0 0 0 1462.3 82.3 L1453.1 91.7 A2.7 2.7 0 0 0 1457.3 95 L1465.9 86.2 A6.8 6.8 0 0 0 1475 77.2 L1469.5 83 L1466.2 78.9 Z"/>
</g>
<!-- symbol-method cube (removeTodo) -->
<g stroke="#b180d7" stroke-width="1.9" stroke-linejoin="round">
<path d="M1613.4 73.6 L1623.1 79.1 L1613.4 84.7 L1603.8 79.1 Z"/>
<path d="M1603.8 79.1 V90.3 L1613.4 96.4 L1623.1 90.3 V79.1"/>
<path d="M1613.4 84.7 V96.4"/>
</g>
<!-- editor actions -->
<path d="M1690.7 25.5 L1706.6 35.6 L1690.7 45.8 Z" stroke="#d0d0d0" stroke-width="2.1" stroke-linejoin="round"/>
<rect x="1734.7" y="23.7" width="21.4" height="21" rx="2.2" stroke="#d0d0d0" stroke-width="2.1"/>
<path d="M1745.4 23.7 V44.7" stroke="#d0d0d0" stroke-width="2.1"/>
<circle cx="1781.1" cy="34.9" r="2.2" fill="#d0d0d0"/><circle cx="1790" cy="34.9" r="2.2" fill="#d0d0d0"/><circle cx="1798.7" cy="34.9" r="2.2" fill="#d0d0d0"/>
</svg>

</body>
</html>
